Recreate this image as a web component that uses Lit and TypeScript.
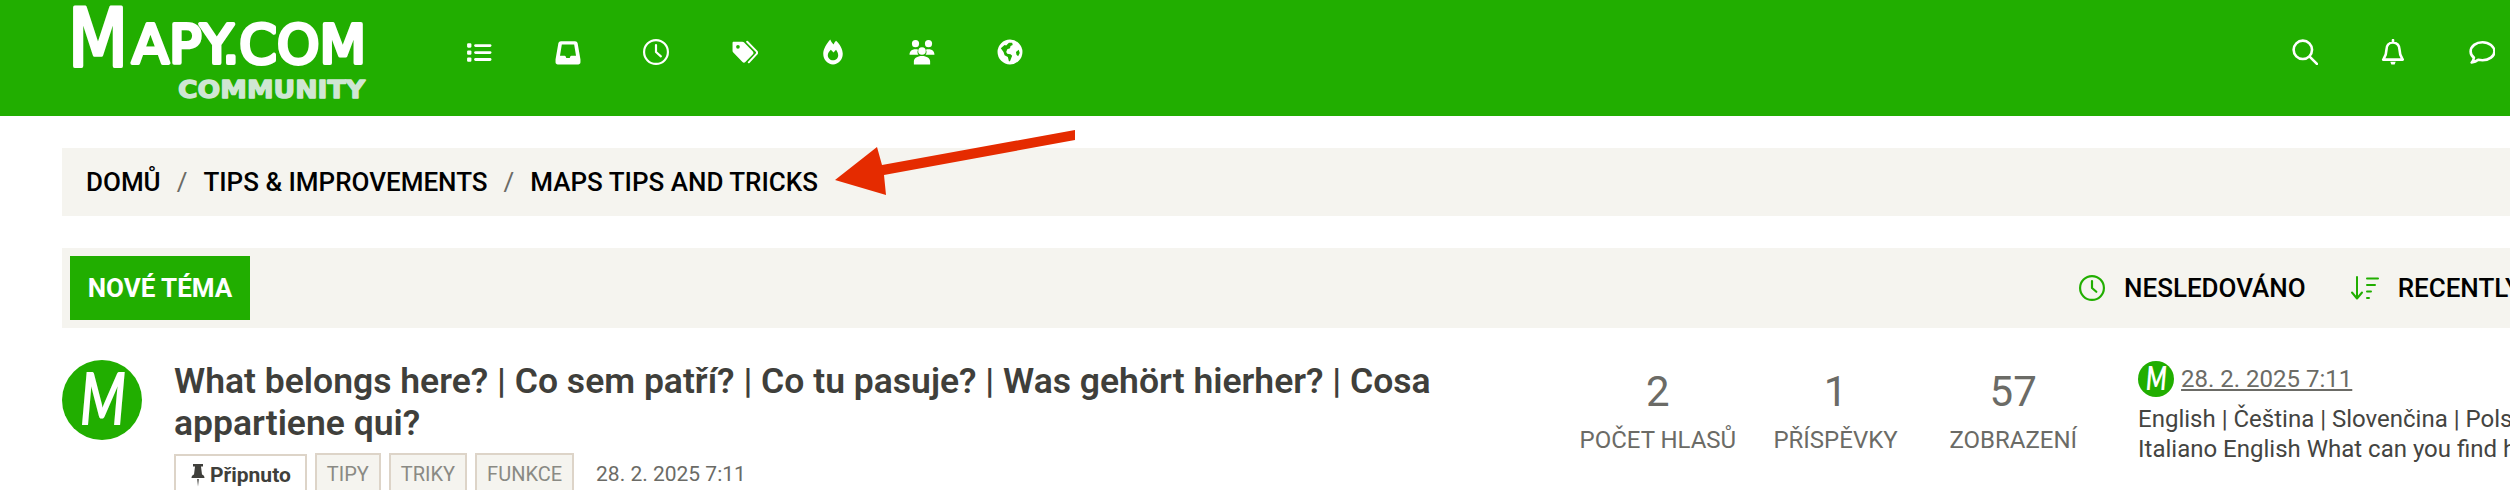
import { LitElement, html, css, svg } from "lit";
import { customElement } from "lit/decorators.js";

const navIcons = [
  svg`<rect x="1" y="4" width="4" height="4" rx="1"/><rect x="1" y="10.5" width="4" height="4" rx="1"/><rect x="1" y="17" width="4" height="4" rx="1"/><rect x="7.5" y="4.8" width="16" height="2.6" rx="1.3"/><rect x="7.5" y="11.2" width="16" height="2.6" rx="1.3"/><rect x="7.5" y="17.6" width="16" height="2.6" rx="1.3"/>`,
  svg`<path fill-rule="evenodd" d="M5.5 2h13c1.2 0 2.1.8 2.4 1.9L23.5 19v2.5c0 1.2-1 2-2 2h-19c-1 0-2-.8-2-2V19L3.100 3.900C3.400 2.800 4.300 2 5.500 2zM6.300 5 4.600 15.500h4.200c.6 0 1 .3 1.200.8l.4 1.200h3.200l.4-1.200c.2-.5.6-.8 1.200-.8h4.200L17.700 5z"/>`,
  svg`<circle cx="12" cy="12" r="11" fill="none" stroke="#fff" stroke-width="2"/><path d="M12 5.500V12l4.500 4" fill="none" stroke="#fff" stroke-width="2" stroke-linecap="round" stroke-linejoin="round"/>`,
  svg`<path fill-rule="evenodd" d="M1.500 2.500h8c.6 0 1.100.2 1.500.6l8.300 8.400c.7.7.7 1.900 0 2.600l-7 7.200c-.7.7-1.900.7-2.600 0L1.200 12.400C.8 12 .5 11.500.5 11V3.500c0-.6.400-1 1-1zM5.500 5.500a1.700 1.700 0 1 0 0 3.400 1.700 1.700 0 0 0 0-3.400z"/><path d="m14 2.500 8.500 8.700c.9.900.9 1.900 0 2.800L15.500 21.500" fill="none" stroke="#fff" stroke-width="1.800" stroke-linecap="round"/>`,
  svg`<path fill-rule="evenodd" d="M9.500.5c.8 2 1.600 3.200 3 4.500.6-1.200 1.500-3 2.300-3.500 3.400 3 6.200 7.800 6.200 12.200C21 19.200 17 23.500 12 23.500S3 19.200 3 13.700C3 9.200 6.200 4.200 9.500.5zM12 19.700c2.700 0 4.800-2.100 4.800-4.800 0-1.800-1-3.700-2-5l-2.300 2.600-2.500-2.500c-1.400 1.500-2.800 3.200-2.800 5 0 2.600 2.100 4.700 4.800 4.700z"/>`,
  svg`<circle cx="6" cy="4.300" r="3.300"/><circle cx="18" cy="4.300" r="3.300"/><circle cx="12" cy="11" r="3.500"/><path d="M.5 14.500c0-3 2-5 5.500-5 .9 0 1.700.1 2.400.4-.4.700-.6 1.400-.6 2.200 0 1 .3 1.800.9 2.400H.5zM23.500 14.500c0-3-2-5-5.500-5-.9 0-1.700.1-2.400.4.400.7.600 1.400.6 2.200 0 1-.3 1.800-.9 2.400h8.200zM4.500 23.500v-2.800c0-2.900 3-5 7.500-5s7.500 2.100 7.500 5v2.800z"/>`,
  svg`<path fill-rule="evenodd" d="M12 .5a11.500 11.500 0 1 0 0 23 11.500 11.500 0 0 0 0-23zM3.500 8.500 7 5.500l1.500.5L11 3.500h3l.5 2-2 1-.5 2-2.500 1-1 2.500 1 1.500 3 .5 1.500 1.500-1 2.500-1 2.500H11l-1-4-3-1.500-1-3zM17.500 12l2.500-2 1 3-1.500 3-1.500-1.500z"/>`,
];

@customElement("app-root")
export class AppRoot extends LitElement {
  static styles = css`
    :host {
      display: block;
      width: 2510px;
      height: 490px;
      overflow: hidden;
      position: relative;
      background: #fff;
      font-family: Roboto, "Liberation Sans", sans-serif;
    }
    .header {
      height: 116px;
      background: #21ae00;
      display: flex;
      align-items: flex-start;
    }
    .logo {
      width: 435px;
      flex: none;
    }
    .logo svg {
      display: block;
    }
    .brand {
      font-family: "DejaVu Sans", sans-serif;
      font-weight: 400;
      fill: #fff;
      stroke: #fff;
      stroke-width: 4px;
      stroke-linejoin: round;
      stroke-linecap: round;
    }
    .sub {
      font-family: "DejaVu Sans", sans-serif;
      font-weight: 700;
      fill: #cfe6d3;
      stroke: #cfe6d3;
      stroke-width: 1.4px;
      stroke-linejoin: round;
    }
    .nav {
      display: flex;
      height: 104px;
      align-items: center;
    }
    .nav-item {
      width: 88.5px;
      display: flex;
      justify-content: center;
    }
    .nav-item svg {
      width: 26px;
      height: 26px;
      fill: #fff;
      display: block;
    }
    .nav.right {
      margin-left: auto;
      margin-right: -16px;
    }
    .line {
      fill: none;
      stroke: #fff;
      stroke-width: 2.4;
      stroke-linecap: round;
      stroke-linejoin: round;
    }
    .page {
      padding: 32px 0 0 62px;
      width: 2700px;
      box-sizing: border-box;
    }
    .crumbs {
      height: 68px;
      background: #f5f4ef;
      display: flex;
      align-items: center;
      padding-left: 24px;
      font-size: 26px;
      font-weight: 500;
      color: #000;
      text-transform: uppercase;
    }
    .sep {
      color: #6b6b66;
      font-weight: 400;
      margin: 0 16px;
    }
    .toolbar {
      margin-top: 32px;
      height: 80px;
      background: #f5f4ef;
      display: flex;
      align-items: center;
      padding-left: 8px;
    }
    .btn {
      width: 180px;
      height: 64px;
      background: #21ae00;
      color: #fff;
      font-size: 26px;
      font-weight: 700;
      display: flex;
      align-items: center;
      justify-content: center;
      text-transform: uppercase;
    }
    .tools {
      margin-left: 1829px;
      display: flex;
      align-items: center;
      font-size: 26px;
      font-weight: 500;
      color: #000;
      text-transform: uppercase;
      white-space: nowrap;
    }
    .tool {
      display: flex;
      align-items: center;
      gap: 19px;
    }
    .tool + .tool {
      margin-left: 44px;
      gap: 18px;
    }
    .tool svg {
      width: 26px;
      height: 26px;
      display: block;
      flex: none;
    }
    .tool + .tool svg {
      width: 30px;
    }
    .g {
      fill: none;
      stroke: #21ae00;
      stroke-width: 2;
      stroke-linecap: round;
      stroke-linejoin: round;
    }
    .topic {
      margin-top: 32px;
      display: flex;
      align-items: flex-start;
    }
    .avatar {
      width: 80px;
      height: 80px;
      flex: none;
      display: block;
    }
    .avatar-m {
      font-family: "Lato", sans-serif;
      font-weight: 700;
      font-style: italic;
      fill: #fff;
    }
    .main {
      width: 1395px;
      margin-left: 32px;
      flex: none;
    }
    h3 {
      margin: 0;
      font-size: 35.5px;
      line-height: 42px;
      font-weight: 600;
      color: #3f3f3b;
    }
    .meta {
      margin-top: 9px;
      display: flex;
      align-items: flex-start;
      gap: 8px;
      font-size: 20px;
    }
    .tag {
      height: 42px;
      box-sizing: border-box;
      border: 2px solid #ddd4c8;
      background: #f5f4ef;
      color: #8a8a84;
      padding: 0 10px;
      display: flex;
      align-items: center;
      text-transform: uppercase;
    }
    .pin {
      margin-top: 1px;
      background: #fff;
      color: #3f3f3b;
      font-size: 21px;
      font-weight: 700;
      text-transform: none;
      gap: 4px;
      padding: 0 14px;
    }
    .pin svg {
      width: 16px;
      height: 24px;
      fill: #3f3f3b;
    }
    .date {
      margin-left: 14px;
      font-size: 21px;
      line-height: 42px;
      color: #6b6b66;
    }
    .stats {
      display: flex;
      flex: none;
    }
    .stat {
      width: 177.7px;
      text-align: center;
      color: #6b6b66;
      margin-top: 7px;
    }
    .num {
      font-size: 42px;
      line-height: 50px;
    }
    .label {
      font-size: 24px;
      line-height: 30px;
      margin-top: 8px;
      text-transform: uppercase;
    }
    .last {
      margin-left: 36px;
      width: 560px;
      flex: none;
      color: #444441;
      font-size: 24px;
      line-height: 30px;
    }
    .last-head {
      display: flex;
      align-items: center;
      gap: 7px;
      margin-top: 1px;
      margin-bottom: 7px;
    }
    .last-head svg {
      width: 36px;
      height: 36px;
      display: block;
    }
    .last-head a {
      color: #6b6b66;
      text-decoration: underline;
    }
    .arrow {
      position: absolute;
      left: 830px;
      top: 125px;
    }
  `;

  private mark() {
    return svg`<circle cx="40" cy="40" r="40" fill="#21ae00"/><text class="avatar-m" x="18" y="65" font-size="72" textLength="46" lengthAdjust="spacingAndGlyphs">M</text>`;
  }

  render() {
    return html`
      <div class="header">
        <div class="logo">
          <svg width="435" height="116" viewBox="0 0 435 116">
            <text class="brand" x="68" y="66" font-size="80" textLength="60" lengthAdjust="spacingAndGlyphs">M</text>
            <text class="brand" x="132" y="63" font-size="54" textLength="234" lengthAdjust="spacingAndGlyphs">APY.COM</text>
            <text class="sub" x="178" y="98" font-size="25" textLength="187" lengthAdjust="spacingAndGlyphs">COMMUNITY</text>
          </svg>
        </div>
        <div class="nav">
          ${navIcons.map(
            (i) => html`<div class="nav-item"><svg viewBox="0 0 24 24">${i}</svg></div>`
          )}
        </div>
        <div class="nav right">
          <div class="nav-item">
            <svg viewBox="0 0 24 24"><circle class="line" cx="10" cy="10" r="8.500"/><path class="line" d="m16.500 16.500 6.500 6.500"/></svg>
          </div>
          <div class="nav-item">
            <svg viewBox="0 0 24 24">
              <path class="line" d="M12 3.200c-4 0-6 3-6 6.500 0 5-1.500 7-3 9.300h18c-1.500-2.300-3-4.300-3-9.300 0-3.500-2-6.500-6-6.500zM12 1v2"/>
              <path d="M9.500 21h5l-1 2.500h-3z"/>
            </svg>
          </div>
          <div class="nav-item">
            <svg viewBox="0 0 24 24"><path class="line" d="M12.500 3C6.500 3 1.500 6.700 1.500 11.500c0 2.300 1.200 4.300 3 5.700-.1 1.600-.8 3.200-2 4.500 2.300-.3 4.500-1.200 6-2.500 1.300.3 2.600.4 4 .4 6 0 11-3.700 11-8.100S18.500 3 12.500 3z"/></svg>
          </div>
        </div>
      </div>

      <div class="page">
        <nav class="crumbs">
          <span>Domů</span><span class="sep">/</span><span>Tips &amp; Improvements</span><span class="sep">/</span><span>Maps tips and tricks</span>
        </nav>

        <div class="toolbar">
          <div class="btn">Nové téma</div>
          <div class="tools">
            <div class="tool">
              <svg viewBox="0 0 24 24"><circle class="g" cx="12" cy="12" r="11"/><path class="g" d="M12 5.500V12l4 3.500"/></svg>
              <span>Nesledováno</span>
            </div>
            <div class="tool">
              <svg viewBox="0 0 30 26"><path class="g" stroke-width="2.600" d="M7 2v21M2 17.500l5 6 5-6M17 3.500h11M17 10h8M17 16.500h4M17 23h2"/></svg>
              <span>Recently updated</span>
            </div>
          </div>
        </div>

        <div class="topic">
          <svg class="avatar" viewBox="0 0 80 80">${this.mark()}</svg>
          <div class="main">
            <h3>What belongs here? | Co sem patří? | Co tu pasuje? | Was gehört hierher? | Cosa appartiene qui?</h3>
            <div class="meta">
              <span class="tag pin">
                <svg viewBox="0 0 16 24"><path d="M3 1h10v2.500h-2l1 8c1.500.7 2.500 1.800 2.500 3.500h-13c0-1.700 1-2.800 2.500-3.500l1-8H3zM7.200 16h1.600L8 23.500z"/></svg>
                Připnuto
              </span>
              <span class="tag">Tipy</span>
              <span class="tag">Triky</span>
              <span class="tag">Funkce</span>
              <span class="date">28. 2. 2025 7:11</span>
            </div>
          </div>
          <div class="stats">
            <div class="stat"><div class="num">2</div><div class="label">Počet hlasů</div></div>
            <div class="stat"><div class="num">1</div><div class="label">Příspěvky</div></div>
            <div class="stat"><div class="num">57</div><div class="label">Zobrazení</div></div>
          </div>
          <div class="last">
            <div class="last-head">
              <svg viewBox="0 0 80 80">${this.mark()}</svg>
              <a>28. 2. 2025 7:11</a>
            </div>
            English | Čeština | Slovenčina | Polski | Deutsch | Italiano English What can you find here
          </div>
        </div>
      </div>

      <svg class="arrow" width="250" height="75" viewBox="830 125 250 75">
        <path d="M835 180 877 147 882 165 1075 130 1075 140 884 175 886 195z" fill="#e52b00"/>
      </svg>
    `;
  }
}
